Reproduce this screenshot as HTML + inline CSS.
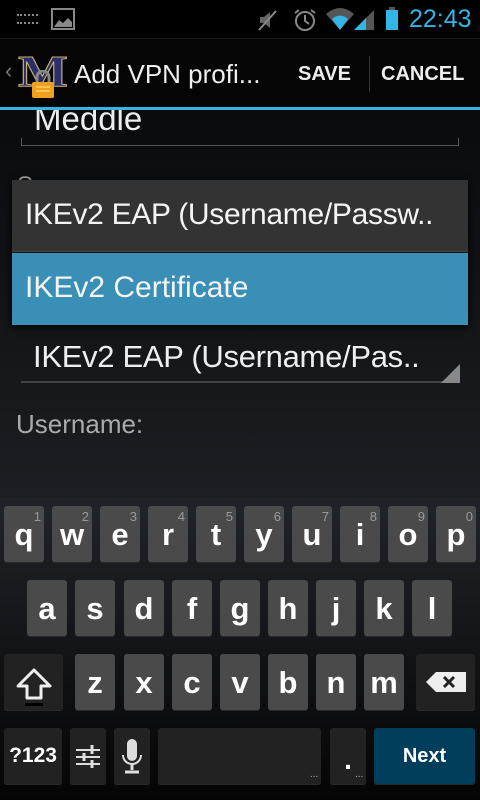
<!DOCTYPE html>
<html><head><meta charset="utf-8">
<style>
*{margin:0;padding:0;box-sizing:border-box}
body{width:480px;height:800px;overflow:hidden;background:#000;font-family:"Liberation Sans",sans-serif;position:relative;color:#fff}
.abs{position:absolute}
.key{position:absolute;background:#4a4a4a;border-radius:3px;color:#fff;font-weight:bold;font-size:31px;text-align:center;line-height:58px;box-shadow:0 1px 0 #2a2a2a}
.key sup{position:absolute;right:3px;top:-18px;font-size:13px;font-weight:normal;color:#9a9a9a}
.dk{background:#222}
</style></head><body>
<!-- status bar -->
<div class="abs" style="left:0;top:0;width:480px;height:38px;background:#000"></div>
<div class="abs" style="left:17px;top:14px;width:21px;height:10px;border-top:2px dotted #888;border-bottom:2px dotted #888"></div>
<div class="abs" style="left:51px;top:8px;width:24px;height:22px;border:2px solid #888"></div>
<svg class="abs" style="left:51px;top:8px" width="24" height="22"><path d="M3 19 L8 12 L12 15 L17 10 L21 14 L21 19Z" fill="#888"/></svg>
<svg class="abs" style="left:256px;top:8px" width="24" height="24"><path d="M4 9h4l6-5v16l-6-5H4z" fill="#666"/><path d="M3 22L20 3" stroke="#888" stroke-width="2"/></svg>
<svg class="abs" style="left:292px;top:7px" width="26" height="26"><circle cx="13" cy="14" r="9" fill="none" stroke="#888" stroke-width="2"/><path d="M13 8v6l4 3" stroke="#888" stroke-width="2" fill="none"/><path d="M3 6l4-3M23 6l-4-3" stroke="#888" stroke-width="2"/></svg>
<svg class="abs" style="left:324px;top:6px" width="52" height="26"><path d="M2 8 Q16 -4 30 8 L16 24Z" fill="#555"/><path d="M8 13 Q16 6 24 13 L16 24Z" fill="#33b5e5"/><path d="M30 24 L50 4 L50 24Z" fill="#555"/><path d="M30 24 L42 12 L42 24Z" fill="#33b5e5"/></svg>
<div class="abs" style="left:386px;top:10px;width:12px;height:20px;background:#33b5e5"></div>
<div class="abs" style="left:389px;top:7px;width:6px;height:3px;background:#555"></div>
<div class="abs" style="left:409px;top:5px;font-size:25px;color:#33b5e5">22:43</div>
<!-- action bar -->
<div class="abs" style="left:0;top:38px;width:480px;height:69px;background:#050505;border-top:1px solid #1a1a1a"></div>
<div class="abs" style="left:5px;top:58px;font-size:22px;color:#777">‹</div>
<div class="abs" style="left:18px;top:52px;font-family:'Liberation Serif',serif;font-weight:bold;font-size:44px;color:#2a2e6a;-webkit-text-stroke:1px #c8b070;line-height:40px;transform:scaleX(1.2);transform-origin:left">M</div>
<svg class="abs" style="left:30px;top:70px" width="26" height="30"><path d="M7 12V7a6 6 0 0112 0v5" fill="none" stroke="#888" stroke-width="3"/><rect x="2" y="12" width="22" height="16" rx="2" fill="#f0a020"/><path d="M6 17h14M6 21h14" stroke="#ffd060" stroke-width="1.5"/></svg>
<div class="abs" style="left:74px;top:59px;font-size:26px;color:#eee">Add VPN profi...</div>
<div class="abs" style="left:298px;top:63px;font-size:20px;font-weight:bold;color:#eee">SAVE</div>
<div class="abs" style="left:369px;top:56px;width:1px;height:36px;background:#333"></div>
<div class="abs" style="left:381px;top:63px;font-size:20px;font-weight:bold;color:#eee">CANCEL</div>
<div class="abs" style="left:0;top:107px;width:480px;height:3px;background:#33b5e5"></div>
<!-- content -->
<div class="abs" style="left:0;top:110px;width:480px;height:388px;background:linear-gradient(#0a0b0d,#1b1e22)"></div>
<div class="abs" style="left:0;top:110px;width:480px;height:30px;overflow:hidden"><div class="abs" style="left:34px;top:-10px;font-size:33px;color:#eee">Meddle</div></div>
<div class="abs" style="left:21px;top:138px;width:438px;height:8px;border:1px solid #555;border-top:none"></div>
<div class="abs" style="left:17px;top:172px;font-size:24px;color:#aaa">Server</div>
<div class="abs" style="left:33px;top:339px;font-size:31px;color:#eee;letter-spacing:-0.3px">IKEv2 EAP (Username/Pas..</div>
<div class="abs" style="left:21px;top:381px;width:438px;height:2px;background:#444"></div>
<svg class="abs" style="left:441px;top:364px" width="19" height="19"><path d="M19 0V19H0Z" fill="#888"/></svg>
<div class="abs" style="left:16px;top:409px;font-size:26px;color:#aaa">Username:</div>
<!-- dropdown -->
<div class="abs" style="left:12px;top:180px;width:456px;height:145px;box-shadow:0 2px 8px #000"></div>
<div class="abs" style="left:12px;top:180px;width:456px;height:72px;background:#333;border-bottom:1px solid #444"></div>
<div class="abs" style="left:25px;top:198px;font-size:30px;color:#f4f4f4;letter-spacing:-0.3px">IKEv2 EAP (Username/Passw..</div>
<div class="abs" style="left:12px;top:253px;width:456px;height:72px;background:#3a8fb7"></div>
<div class="abs" style="left:25px;top:271px;font-size:30px;color:#f4f4f4">IKEv2 Certificate</div>
<!-- keyboard -->
<div class="abs" style="left:0;top:498px;width:480px;height:302px;background:linear-gradient(#202328,#050505)"></div>
<div class="key" style="left:4px;top:506px;width:40px;height:56px">q<sup>1</sup></div>
<div class="key" style="left:52px;top:506px;width:40px;height:56px">w<sup>2</sup></div>
<div class="key" style="left:100px;top:506px;width:40px;height:56px">e<sup>3</sup></div>
<div class="key" style="left:148px;top:506px;width:40px;height:56px">r<sup>4</sup></div>
<div class="key" style="left:196px;top:506px;width:40px;height:56px">t<sup>5</sup></div>
<div class="key" style="left:244px;top:506px;width:40px;height:56px">y<sup>6</sup></div>
<div class="key" style="left:292px;top:506px;width:40px;height:56px">u<sup>7</sup></div>
<div class="key" style="left:340px;top:506px;width:40px;height:56px">i<sup>8</sup></div>
<div class="key" style="left:388px;top:506px;width:40px;height:56px">o<sup>9</sup></div>
<div class="key" style="left:436px;top:506px;width:40px;height:56px">p<sup>0</sup></div>
<div class="key" style="left:27px;top:580px;width:40px;height:56px">a</div>
<div class="key" style="left:75px;top:580px;width:40px;height:56px">s</div>
<div class="key" style="left:124px;top:580px;width:40px;height:56px">d</div>
<div class="key" style="left:172px;top:580px;width:40px;height:56px">f</div>
<div class="key" style="left:220px;top:580px;width:40px;height:56px">g</div>
<div class="key" style="left:268px;top:580px;width:40px;height:56px">h</div>
<div class="key" style="left:316px;top:580px;width:40px;height:56px">j</div>
<div class="key" style="left:364px;top:580px;width:40px;height:56px">k</div>
<div class="key" style="left:412px;top:580px;width:40px;height:56px">l</div>
<div class="key dk" style="left:4px;top:654px;width:59px;height:56px"></div>
<svg class="abs" style="left:15px;top:667px" width="38" height="40"><path d="M19 3L35 19H26V31H12V19H3Z" fill="none" stroke="#eee" stroke-width="3" stroke-linejoin="round"/><rect x="10" y="36" width="18" height="3" fill="#000"/></svg>
<div class="key" style="left:75px;top:654px;width:40px;height:56px">z</div>
<div class="key" style="left:124px;top:654px;width:40px;height:56px">x</div>
<div class="key" style="left:172px;top:654px;width:40px;height:56px">c</div>
<div class="key" style="left:220px;top:654px;width:40px;height:56px">v</div>
<div class="key" style="left:268px;top:654px;width:40px;height:56px">b</div>
<div class="key" style="left:316px;top:654px;width:40px;height:56px">n</div>
<div class="key" style="left:364px;top:654px;width:40px;height:56px">m</div>
<div class="key dk" style="left:416px;top:654px;width:59px;height:56px"></div>
<svg class="abs" style="left:426px;top:672px" width="40" height="22"><path d="M10 0H40V20H10L0 10Z" fill="#eee"/><path d="M18 5L28 15M28 5L18 15" stroke="#222" stroke-width="3"/></svg>
<div class="key dk" style="left:4px;top:728px;width:58px;height:56px;font-size:21px;line-height:56px">?123</div>
<div class="key dk" style="left:70px;top:728px;width:36px;height:56px"></div>
<svg class="abs" style="left:75px;top:742px" width="26" height="28"><path d="M1 8H25M1 15H25M1 22H25" stroke="#ddd" stroke-width="2"/><path d="M17 3V12M9 11V19M17 18V26" stroke="#ddd" stroke-width="3"/></svg>
<div class="key dk" style="left:114px;top:728px;width:36px;height:56px"></div>
<svg class="abs" style="left:120px;top:737px" width="24" height="40"><rect x="7" y="2" width="10" height="22" rx="5" fill="#ddd"/><path d="M3 18a9 9 0 0018 0" fill="none" stroke="#ddd" stroke-width="2"/><path d="M12 27V33M5 35H19" stroke="#ddd" stroke-width="3"/></svg>
<div class="key dk" style="left:158px;top:728px;width:163px;height:56px"></div>
<div class="abs" style="left:310px;top:769px;font-size:10px;color:#aaa">...</div>
<div class="key dk" style="left:330px;top:728px;width:36px;height:56px;font-size:28px;line-height:64px">.</div>
<div class="abs" style="left:355px;top:769px;font-size:10px;color:#aaa">...</div>
<div class="key" style="left:374px;top:728px;width:101px;height:56px;background:#003e5c;font-size:20px;line-height:56px">Next</div>
</body></html>
